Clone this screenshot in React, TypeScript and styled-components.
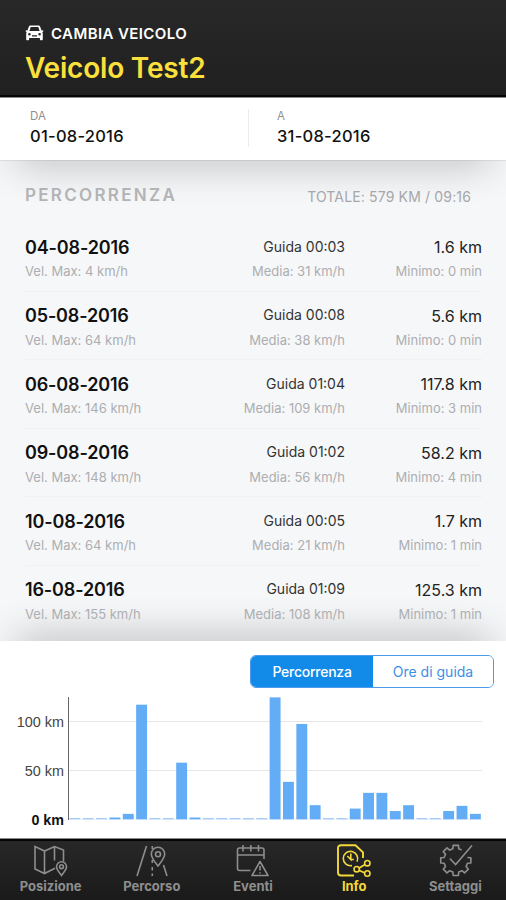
import React from "react";
import styled, { createGlobalStyle } from "styled-components";

const GlobalStyle = createGlobalStyle`
  * { box-sizing: border-box; }
  body { margin: 0; background: #1c1c1c; font-family: Inter, "Liberation Sans", sans-serif; }
`;

const Screen = styled.div`
  width: 506px;
  height: 900px;
  display: flex;
  flex-direction: column;
  overflow: hidden;
  background: #fff;
`;

const Header = styled.header`
  height: 98px;
  flex: none;
  padding: 23px 25px 0;
  background: linear-gradient(#282828, #202020);
  border-bottom: 1px solid #8b8b8b;
  box-shadow: inset 0 -2px 0 #050505;
`;

const ChangeVehicle = styled.div`
  display: flex;
  align-items: center;
  gap: 7px;
  height: 20px;
  color: #fff;
  font-size: 15px;
  font-weight: 600;
  letter-spacing: 0.4px;
  white-space: nowrap;
`;

const VehicleName = styled.h1`
  margin: 8px 0 0;
  color: #fbe03c;
  font-size: 28px;
  line-height: 34px;
  font-weight: 600;
  letter-spacing: -0.2px;
  white-space: nowrap;
`;

const DateRange = styled.section`
  height: 62px;
  flex: none;
  display: flex;
  padding: 11px 0 0;
  background: #fff;
  position: relative;
  z-index: 1;
`;

const DateField = styled.div<{ $from?: boolean }>`
  width: ${(p) => (p.$from ? "249px" : "257px")};
  height: 38px;
  padding-left: ${(p) => (p.$from ? 30 : 28)}px;
  border-right: ${(p) => (p.$from ? "1px solid #ececec" : "none")};
`;

const DateLabel = styled.div`
  color: #8f8f8f;
  font-size: 11.5px;
  line-height: 14px;
`;

const DateValue = styled.div`
  margin-top: 3px;
  color: #111;
  font-size: 16.5px;
  line-height: 20px;
  font-weight: 500;
  letter-spacing: 0.25px;
`;

const Trips = styled.section`
  height: 481px;
  flex: none;
  padding: 0 24px 0 25px;
  position: relative;
  overflow: hidden;
  background: #f6f7f9;
  box-shadow: inset 0 1px 0 #e4e5e6;
  &::before, &::after {
    content: "";
    position: absolute;
    left: 18px;
    right: 18px;
    height: 20px;
    box-shadow: 0 0 42px 2px rgba(0, 0, 0, 0.32);
  }
  &::before { top: -21px; }
  &::after { bottom: -21px; }
`;

const TripsHeader = styled.div`
  height: 63px;
  display: flex;
  justify-content: space-between;
  align-items: flex-start;
  padding: 25px 11px 0 0;
  position: relative;
  z-index: 1;
`;

const TripsTitle = styled.h2`
  margin: 0;
  color: #b2b3b4;
  font-size: 17px;
  line-height: 21px;
  font-weight: 600;
  letter-spacing: 2.3px;
`;

const TripsTotal = styled.div`
  padding-top: 2px;
  color: #a6a7a8;
  font-size: 14px;
  line-height: 20px;
  letter-spacing: 0.15px;
`;

const TripRow = styled.div`
  height: 68.5px;
  display: grid;
  grid-template-columns: 160px 160px 137px;
  grid-template-rows: 24px 20px;
  row-gap: 2px;
  align-items: center;
  padding-top: 12px;
  border-bottom: 1px solid #f0f1f2;
  position: relative;
  z-index: 1;
  white-space: nowrap;
  &:last-child { border-bottom: none; }
`;

const TripDate = styled.div`
  color: #111;
  font-size: 18px;
  font-weight: 600;
  letter-spacing: -0.15px;
`;

const TripDrive = styled.div`
  padding-bottom: 2px;
  color: #333;
  font-size: 14px;
  text-align: right;
`;

const TripDistance = styled.div`
  color: #222;
  font-size: 16px;
  text-align: right;
`;

const TripDetail = styled.div<{ $right?: boolean }>`
  color: #adaeb0;
  font-size: 13px;
  text-align: ${(p) => (p.$right ? "right" : "left")};
`;

const ChartPanel = styled.section`
  height: 197px;
  flex: none;
  display: flex;
  flex-direction: column;
  padding: 14px 12px 0 0;
  background: #fff;
`;

const Segmented = styled.div`
  align-self: flex-end;
  display: grid;
  grid-template-columns: 122px 1fr;
  width: 244px;
  height: 33px;
  border: 1px solid #4c9aea;
  border-radius: 6px;
  overflow: hidden;
`;

const Segment = styled.button<{ $active?: boolean }>`
  border: 0;
  padding: 0;
  font: ${(p) => (p.$active ? 500 : 400)} 14px Inter, sans-serif;
  letter-spacing: ${(p) => (p.$active ? -0.25 : 0)}px;
  color: ${(p) => (p.$active ? "#fff" : "#3d8fe8")};
  background: ${(p) => (p.$active ? "#128ae8" : "#fff")};
`;

const ChartBody = styled.div`
  display: flex;
  height: 123px;
  margin-top: 9px;
`;

const AxisLabels = styled.div`
  width: 68px;
  height: 132px;
  padding: 15px 4px 0 0;
  display: flex;
  flex-direction: column;
  gap: 29px;
  text-align: right;
`;

const AxisLabel = styled.div<{ $strong?: boolean }>`
  color: ${(p) => (p.$strong ? "#111" : "#444")};
  font-family: "Liberation Sans", sans-serif;
  font-size: ${(p) => (p.$strong ? 14.3 : 14.4)}px;
  line-height: 20px;
  font-weight: ${(p) => (p.$strong ? 700 : 400)};
`;

const Plot = styled.svg`
  display: block;
  width: 414px;
  height: 123px;
`;

const TabBar = styled.nav`
  height: 62px;
  flex: none;
  display: grid;
  grid-template-columns: repeat(5, 1fr);
  padding-top: 5px;
  border-top: 1px solid #8b8b8b;
  box-shadow: inset 0 2px 0 #050505;
  background: linear-gradient(#282828, #1a1a1a);
`;

const Tab = styled.div<{ $active?: boolean }>`
  display: flex;
  flex-direction: column;
  align-items: center;
  color: ${(p) => (p.$active ? "#f3d939" : "#8e8e8e")};
  font-size: 13px;
  line-height: 16px;
  font-weight: 700;
  svg { display: block; }
`;

const trips = [
  ["04-08-2016", "00:03", "1.6", "4", "31", "0"],
  ["05-08-2016", "00:08", "5.6", "64", "38", "0"],
  ["06-08-2016", "01:04", "117.8", "146", "109", "3"],
  ["09-08-2016", "01:02", "58.2", "148", "56", "4"],
  ["10-08-2016", "00:05", "1.7", "64", "21", "1"],
  ["16-08-2016", "01:09", "125.3", "155", "108", "1"],
];

const dailyKm = [
  0, 0, 0, 1.2, 5.6, 117.8, 0, 0, 58.2, 1.7, 0, 0, 0, 0, 0, 125.3, 38.5, 98, 14.5, 0, 0,
  11, 27.2, 27.2, 8.5, 14.5, 0, 0, 8.5, 13.8, 5.6,
];

const CarIcon = () => (
  <svg width="19" height="19" viewBox="0 0 19 19" fill="currentColor">
    <path
      fillRule="evenodd"
      d="M5.4 1.5h8.2c.7 0 1.2.4 1.5 1.1l1.4 4 1.700-.3v1.400l-1 .4c.4.5.6 1.100.6 1.800v5.500c0 .5-.3.8-.8.8h-1.300c-.5 0-.8-.3-.8-.8v-1.300H4.100v1.300c0 .5-.3.8-.8.8H2c-.5 0-.8-.3-.8-.8V9.900c0-.7.2-1.300.6-1.800l-1-.4V6.300l1.700.3 1.400-4c.3-.7.8-1.100 1.500-1.100zM5.700 3.100 4.400 7h10.200l-1.300-3.900zM4.400 8.900a1.300 1.300 0 1 0 0 2.600 1.300 1.300 0 0 0 0-2.600zm10.200 0a1.300 1.300 0 1 0 0 2.600 1.300 1.300 0 0 0 0-2.600zM7 11.200v1.400h5v-1.400z"
    />
  </svg>
);

const Glyph = ({ children }: { children: React.ReactNode }) => (
  <svg width="36" height="34" viewBox="0 0 36 34" fill="none" stroke="currentColor" strokeWidth="1.6">
    {children}
  </svg>
);

const MapIcon = () => (
  <Glyph>
    <path d="M22 24.300 11.500 29.500 2 25V2.500L11.500 7l10-4.500L30.500 6v11.500M11.500 7v22.500M21.500 2.500v14" />
    <path d="M28.500 31.500c-3-4-5-6-5-8.700a5 5 0 0 1 10 0c0 2.700-2 4.700-5 8.700z" />
    <circle cx="28.500" cy="22.700" r="1.900" />
  </Glyph>
);

const RoadIcon = () => (
  <Glyph>
    <path d="M12.500 2 3 32M33 32l-3.500-11M18.300 2v3M18.300 16v3M18.300 23v3.500M18.300 29.500V32" />
    <path d="M24 22c-3.500-4.600-6.700-8-6.700-12a6.700 6.700 0 0 1 13.400 0c0 4-3.200 7.400-6.700 12z" />
    <circle cx="24" cy="10.200" r="2.500" />
  </Glyph>
);

const CalendarIcon = () => (
  <Glyph>
    <path d="M15.500 26.500H4.500c-1.500 0-2-.8-2-2V6c0-1.200.7-2 2-2H27c1.300 0 2 .8 2 2v9M2.500 11H29M8 1v6.500M15.800 1v6.500M23.500 1v6.500" />
    <path d="M25 17.500 33 31.500h-16zM25 22v4.500M25 28.200v1.300" strokeLinejoin="round" />
  </Glyph>
);

const InfoIcon = () => (
  <Glyph>
    <path d="M18 31.500H5c-2 0-3-1-3-3V4c0-1.700 1-2.700 3-2.700h14.500l7.500 7V14" strokeWidth="1.900" />
    <path d="M16 21.600a7.200 7.200 0 1 1 5-4M14.800 9.500v6l-3.500-3.500M14.800 15.500h3" />
    <path d="M22.800 24.300 29 20.500M22.800 26.200 29 29" />
    <circle cx="20.700" cy="25.200" r="2.700" />
    <circle cx="31.300" cy="19.200" r="2.700" />
    <circle cx="31.300" cy="29.500" r="2.700" />
  </Glyph>
);

const gearPoint = (radius: number, degrees: number) => {
  const angle = (degrees * Math.PI) / 180;
  return `${(18.8 + radius * Math.cos(angle)).toFixed(2)} ${(16.4 + radius * Math.sin(angle)).toFixed(2)}`;
};

const gearOutline =
  "M" +
  [0, 45, 90, 135, 180, 225, 270]
    .flatMap((a) => [
      gearPoint(12, a - 14),
      gearPoint(15.3, a - 10),
      gearPoint(15.3, a + 10),
      gearPoint(12, a + 14),
    ])
    .concat(gearPoint(12, 299))
    .join("L");

const GearIcon = () => (
  <Glyph>
    <path d={gearOutline} strokeLinejoin="round" />
    <path d="m12.800 14.500 5.800 6L35 1.500" />
  </Glyph>
);

const tabs = [
  { label: "Posizione", Icon: MapIcon },
  { label: "Percorso", Icon: RoadIcon },
  { label: "Eventi", Icon: CalendarIcon },
  { label: "Info", Icon: InfoIcon, active: true },
  { label: "Settaggi", Icon: GearIcon },
];

const MileageChart = () => (
  <Plot viewBox="0 0 414 123">
    <path d="M0 24.500H414M0 73.500H414" stroke="#e6e6e9" />
    <path d="M0 122.500H414" stroke="#e9f1fc" />
    {dailyKm.map((km, day) => {
      const height = km ? Math.max(1.8, km * 0.973) : 1.3;
      return (
        <rect
          key={day}
          x={1.4 + day * 13.35}
          y={122.300 - height}
          width={10.9}
          height={height}
          fill={km ? "#62adf5" : "#a9ccf6"}
        />
      );
    })}
    <path d="M.5 0V123" stroke="#666" />
  </Plot>
);

export default function App() {
  return (
    <Screen>
      <GlobalStyle />
      <Header>
        <ChangeVehicle>
          <CarIcon />
          CAMBIA VEICOLO
        </ChangeVehicle>
        <VehicleName>Veicolo Test2</VehicleName>
      </Header>
      <DateRange>
        <DateField $from>
          <DateLabel>DA</DateLabel>
          <DateValue>01-08-2016</DateValue>
        </DateField>
        <DateField>
          <DateLabel>A</DateLabel>
          <DateValue>31-08-2016</DateValue>
        </DateField>
      </DateRange>
      <Trips>
        <TripsHeader>
          <TripsTitle>PERCORRENZA</TripsTitle>
          <TripsTotal>TOTALE: 579 KM / 09:16</TripsTotal>
        </TripsHeader>
        {trips.map(([date, drive, km, max, avg, idle]) => (
          <TripRow key={date}>
            <TripDate>{date}</TripDate>
            <TripDrive>Guida {drive}</TripDrive>
            <TripDistance>{km} km</TripDistance>
            <TripDetail>Vel. Max: {max} km/h</TripDetail>
            <TripDetail $right>Media: {avg} km/h</TripDetail>
            <TripDetail $right>Minimo: {idle} min</TripDetail>
          </TripRow>
        ))}
      </Trips>
      <ChartPanel>
        <Segmented>
          <Segment $active>Percorrenza</Segment>
          <Segment>Ore di guida</Segment>
        </Segmented>
        <ChartBody>
          <AxisLabels>
            <AxisLabel>100 km</AxisLabel>
            <AxisLabel>50 km</AxisLabel>
            <AxisLabel $strong>0 km</AxisLabel>
          </AxisLabels>
          <MileageChart />
        </ChartBody>
      </ChartPanel>
      <TabBar>
        {tabs.map(({ label, Icon, active }) => (
          <Tab key={label} $active={active}>
            <Icon />
            {label}
          </Tab>
        ))}
      </TabBar>
    </Screen>
  );
}
